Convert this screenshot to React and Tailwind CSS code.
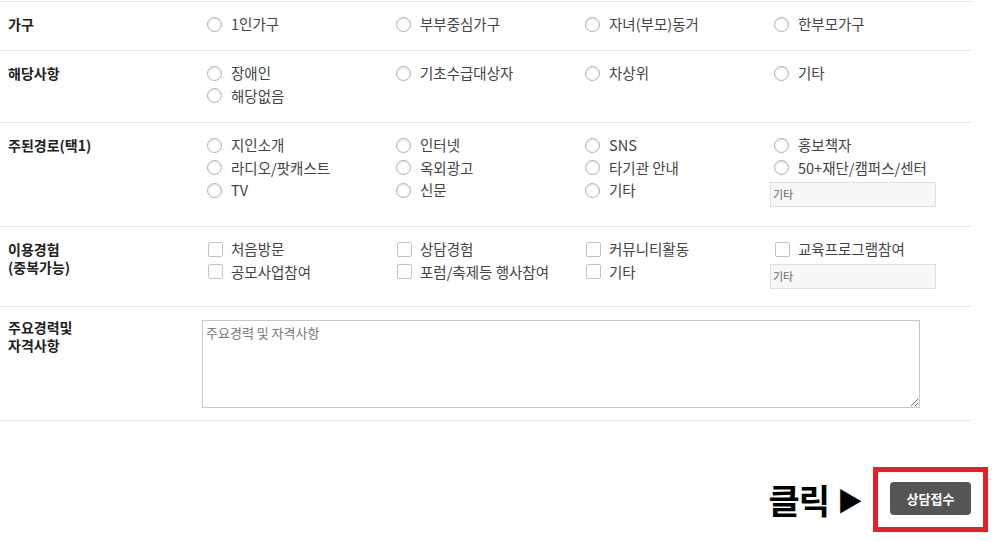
import React from "react";

const font = { fontFamily: '"Noto Sans CJK KR", "Noto Sans", sans-serif' };

function Radio({ label }) {
  return (
    <div className="flex items-center h-[22.5px] w-[189px]">
      <span className="ml-[4px] w-[15px] h-[15px] rounded-full border border-[#b0b0b0] bg-white shadow-[inset_0_1px_2px_rgba(0,0,0,0.12)] shrink-0" />
      <span className="ml-[9px] text-[14.5px] text-[#444] whitespace-nowrap">{label}</span>
    </div>
  );
}

function Check({ label }) {
  return (
    <div className="flex items-center h-[22.5px] w-[189px]">
      <span className="ml-[5px] w-[15px] h-[15px] rounded-[2px] border border-[#c4c4c4] bg-white shrink-0" />
      <span className="ml-[8px] text-[14.5px] text-[#444] whitespace-nowrap">{label}</span>
    </div>
  );
}

function EtcInput({ mt }) {
  return (
    <div className={`w-[189px] h-[22.5px] ${mt}`}>
      <div className="w-[166px] h-[25px] bg-[#f8f8f8] border border-[#dedede] flex items-center pl-[2px] text-[11px] text-[#666]">
        기타
      </div>
    </div>
  );
}

function Row({ h, label, children }) {
  return (
    <div className={`flex border-b border-[#e3e3e3] ${h}`}>
      <div className="w-[203px] shrink-0 pl-[8px] pt-[12px]">
        <div className="text-[14px] font-bold text-[#222] leading-[18px] pt-[1px]">{label}</div>
      </div>
      <div className="flex-1 pt-[11px]">{children}</div>
    </div>
  );
}

export default function App() {
  return (
    <div className="w-[1000px] h-[541px] bg-white overflow-hidden" style={font}>
      <div className="w-[971px] border-t border-[#e3e3e3] mt-[1px]">
        <Row h="h-[49px]" label="가구">
          <div className="flex flex-wrap w-[756px]">
            <Radio label="1인가구" />
            <Radio label="부부중심가구" />
            <Radio label="자녀(부모)동거" />
            <Radio label="한부모가구" />
          </div>
        </Row>
        <Row h="h-[72px]" label="해당사항">
          <div className="flex flex-wrap w-[756px]">
            <Radio label="장애인" />
            <Radio label="기초수급대상자" />
            <Radio label="차상위" />
            <Radio label="기타" />
            <Radio label="해당없음" />
          </div>
        </Row>
        <Row h="h-[104px]" label="주된경로(택1)">
          <div className="flex flex-wrap w-[756px]">
            <Radio label="지인소개" />
            <Radio label="인터넷" />
            <Radio label="SNS" />
            <Radio label="홍보책자" />
            <Radio label="라디오/팟캐스트" />
            <Radio label="옥외광고" />
            <Radio label="타기관 안내" />
            <Radio label="50+재단/캠퍼스/센터" />
            <Radio label="TV" />
            <Radio label="신문" />
            <Radio label="기타" />
            <EtcInput mt="mt-[3px]" />
          </div>
        </Row>
        <Row
          h="h-[80px]"
          label={
            <>
              이용경험
              <br />
              (중복가능)
            </>
          }
        >
          <div className="flex flex-wrap w-[756px]">
            <Check label="처음방문" />
            <Check label="상담경험" />
            <Check label="커뮤니티활동" />
            <Check label="교육프로그램참여" />
            <Check label="공모사업참여" />
            <Check label="포럼/축제등 행사참여" />
            <Check label="기타" />
            <EtcInput mt="mt-[3px]" />
          </div>
        </Row>
        <div className="flex border-b border-[#e3e3e3] h-[114px]">
          <div className="w-[202px] shrink-0 pl-[8px] pt-[11px]">
            <div className="text-[14px] font-bold text-[#222] leading-[18px]">
              주요경력및
              <br />
              자격사항
            </div>
          </div>
          <div className="pt-[13px]">
            <textarea
              className="w-[718px] h-[88px] border border-[#c8c8c8] px-[3px] py-[2px] text-[13px] text-[#444] placeholder:text-[#777] resize-y outline-none"
              placeholder="주요경력 및 자격사항"
              style={font}
            />
          </div>
        </div>
      </div>
      <div className="flex justify-end items-center w-[988px] mt-[46px]">
        <span className="text-[34px] font-bold text-black leading-none tracking-[-1px]">클릭</span>
        <span className="ml-[8px] mr-[10px] text-[26px] text-black leading-none">▶</span>
        <div className="border-[5px] border-[#ec1c24] pt-[10px] pb-[12px] px-[12px]">
          <button className="w-[81px] h-[33px] bg-[#555] rounded-[4px] text-white text-[13px] font-bold" style={font}>
            상담접수
          </button>
        </div>
      </div>
    </div>
  );
}
